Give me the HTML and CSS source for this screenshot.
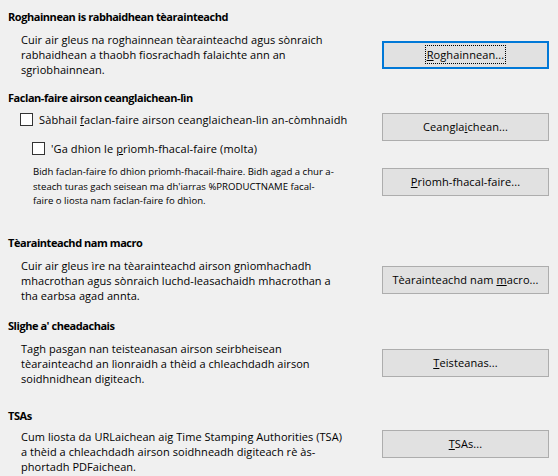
FILE: index.html
```html
<!DOCTYPE html>
<html lang="gd">
<head>
<meta charset="utf-8">
<title>Tèarainteachd</title>
<link rel="stylesheet" href="styles.css">
</head>
<body>
<main class="page">
  <section class="group">
    <h2 class="group-title">Roghainnean is rabhaidhean tèarainteachd</h2>
    <div class="row">
      <p class="desc">Cuir air gleus na roghainnean tèarainteachd agus sònraich<br>rabhaidhean a thaobh fiosrachadh falaichte ann an<br>sgrìobhainnean.</p>
      <button class="btn btn-focus" type="button"><span class="focus-ring"><u>R</u>oghainnean...</span></button>
    </div>
  </section>

  <section class="group group-2">
    <h2 class="group-title">Faclan-faire airson ceanglaichean-lìn</h2>
    <div class="row row-top row-check">
      <label class="check"><span class="box"></span><span>Sàbhail <u>f</u>aclan-faire airson ceanglaichean-lìn an-còmhnaidh</span></label>
      <button class="btn btn-nudge-1" type="button">Ceangla<u>i</u>chean...</button>
    </div>
    <div class="subrow">
      <label class="check"><span class="box"></span><span>'Ga dhìon le <u>p</u>rìomh-fhacal-faire (molta)</span></label>
    </div>
    <div class="row row-top row-note">
      <p class="note">Bidh faclan-faire fo dhìon prìomh-fhacail-fhaire. Bidh agad a chur a-<br>steach turas gach seisean ma dh'iarras %PRODUCTNAME facal-<br>faire o liosta nam faclan-faire fo dhìon.</p>
      <button class="btn btn-nudge-3" type="button"><u>P</u>rìomh-fhacal-faire...</button>
    </div>
  </section>

  <section class="group group-3">
    <h2 class="group-title">Tèarainteachd nam macro</h2>
    <div class="row">
      <p class="desc">Cuir air gleus ìre na tèarainteachd airson gnìomhachadh<br>mhacrothan agus sònraich luchd-leasachaidh mhacrothan a<br>tha earbsa agad annta.</p>
      <button class="btn" type="button">Tèarainteachd nam <u>m</u>acro...</button>
    </div>
  </section>

  <section class="group group-4">
    <h2 class="group-title">Slighe a' cheadachais</h2>
    <div class="row">
      <p class="desc">Tagh pasgan nan teisteanasan airson seirbheisean<br>tèarainteachd an lìonraidh a thèid a chleachdadh airson<br>soidhnidhean digiteach.</p>
      <button class="btn" type="button"><u>T</u>eisteanas...</button>
    </div>
  </section>

  <section class="group group-5">
    <h2 class="group-title">TSAs</h2>
    <div class="row row-top row-tight">
      <p class="desc">Cum liosta da URLaichean aig Time Stamping Authorities (TSA)<br>a thèid a chleachdadh airson soidhneadh digiteach rè às-<br>phortadh PDFaichean.</p>
      <button class="btn btn-nudge-1" type="button"><u>T</u>SAs...</button>
    </div>
  </section>
</main>
</body>
</html>
```

FILE: styles.css
```css
html, body {
  margin: 0;
  padding: 0;
}

body {
  background: #f0f0f0;
  color: #000;
  font-family: "Open Sans", "Noto Sans", "DejaVu Sans", sans-serif;
  font-size: 11px;
  letter-spacing: 0.05px;
  width: 558px;
  height: 476px;
  overflow: hidden;
}

.page {
  padding: 9px 9px 0 8px;
}

.group-title {
  margin: 0;
  font-size: 11px;
  font-weight: 700;
  letter-spacing: -0.45px;
  line-height: 16px;
}

.group-2 { margin-top: 13px; }
.group-3 { margin-top: 26px; }
.group-4 { margin-top: 15px; }
.group-5 { margin-top: 22px; }

.row {
  display: flex;
  align-items: center;
  justify-content: space-between;
  margin-top: 7px;
  padding-left: 13px;
}

.row-top { align-items: flex-start; }
.row-tight { margin-top: 5px; }
.row-check { margin-top: 6px; padding-left: 12px; }
.row-note { margin-top: 9px; padding-left: 25px; }

.subrow {
  padding-left: 24px;
}

.desc {
  margin: 0;
  line-height: 15px;
  white-space: nowrap;
}

.note {
  margin: 0;
  font-size: 9.6px;
  letter-spacing: 0;
  line-height: 14.5px;
  white-space: nowrap;
}

.check {
  display: flex;
  align-items: center;
  gap: 6px;
  line-height: 15px;
  letter-spacing: 0.12px;
  white-space: nowrap;
}

.box {
  display: block;
  width: 13px;
  height: 13px;
  box-sizing: border-box;
  border: 1px solid #333;
  background: #fff;
  flex: none;
}

.btn {
  flex: none;
  width: 167px;
  height: 28px;
  box-sizing: border-box;
  margin: 0;
  padding: 0;
  background: #e1e1e1;
  border: 1px solid #adadad;
  border-radius: 0;
  color: #000;
  font: inherit;
  letter-spacing: 0.1px;
  line-height: 16px;
  text-align: center;
}

.btn-nudge-1 { margin-top: 1px; }
.btn-nudge-3 { margin-top: 3px; }

.btn-focus {
  border: 2px solid #0078d7;
}

.focus-ring {
  display: inline-block;
  outline: 1px dotted #000;
  padding: 1px 1px 0;
}

u {
  text-decoration: underline;
  text-underline-offset: 1px;
}
```
